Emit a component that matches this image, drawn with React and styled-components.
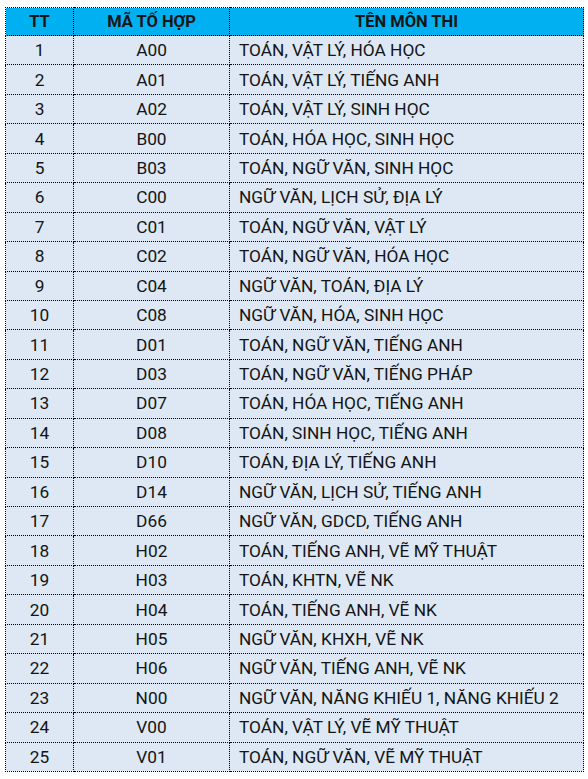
import React from "react";
import styled, { createGlobalStyle } from "styled-components";

const GlobalStyle = createGlobalStyle`
  body {
    margin: 0;
    padding: 7px 5px;
    background: #ffffff;
    font-family: Roboto, "Noto Sans", sans-serif;
  }
`;

const Table = styled.table`
  border-collapse: collapse;
  width: 578px;
  table-layout: fixed;
  color: #141414;
  font-size: 17.3px;
`;

const Col = styled.col`
  width: ${(p) => p.$w}px;
`;

const HeadCell = styled.th`
  background: #00b0f0;
  border: 1px dotted #000;
  height: 27px;
  padding: 0;
  font-weight: 700;
  font-size: 16.5px;
  text-align: center;
`;

const Row = styled.tr`
  height: 29.44px;
  background: #dde8f4;
`;

const Cell = styled.td`
  border: 1px dotted #000;
  padding: 0 ${(p) => (p.$left ? "9px" : "0")};
  text-align: ${(p) => (p.$left ? "left" : "center")};
  white-space: nowrap;
`;

const rows = [
  ["A00", "TOÁN, VẬT LÝ, HÓA HỌC"],
  ["A01", "TOÁN, VẬT LÝ, TIẾNG ANH"],
  ["A02", "TOÁN, VẬT LÝ, SINH HỌC"],
  ["B00", "TOÁN, HÓA HỌC, SINH HỌC"],
  ["B03", "TOÁN, NGỮ VĂN, SINH HỌC"],
  ["C00", "NGỮ VĂN, LỊCH SỬ, ĐỊA LÝ"],
  ["C01", "TOÁN, NGỮ VĂN, VẬT LÝ"],
  ["C02", "TOÁN, NGỮ VĂN, HÓA HỌC"],
  ["C04", "NGỮ VĂN, TOÁN, ĐỊA LÝ"],
  ["C08", "NGỮ VĂN, HÓA, SINH HỌC"],
  ["D01", "TOÁN, NGỮ VĂN, TIẾNG ANH"],
  ["D03", "TOÁN, NGỮ VĂN, TIẾNG PHÁP"],
  ["D07", "TOÁN, HÓA HỌC, TIẾNG ANH"],
  ["D08", "TOÁN, SINH HỌC, TIẾNG ANH"],
  ["D10", "TOÁN, ĐỊA LÝ, TIẾNG ANH"],
  ["D14", "NGỮ VĂN, LỊCH SỬ, TIẾNG ANH"],
  ["D66", "NGỮ VĂN, GDCD, TIẾNG ANH"],
  ["H02", "TOÁN, TIẾNG ANH, VẼ MỸ THUẬT"],
  ["H03", "TOÁN, KHTN, VẼ NK"],
  ["H04", "TOÁN, TIẾNG ANH, VẼ NK"],
  ["H05", "NGỮ VĂN, KHXH, VẼ NK"],
  ["H06", "NGỮ VĂN, TIẾNG ANH, VẼ NK"],
  ["N00", "NGỮ VĂN, NĂNG KHIẾU 1, NĂNG KHIẾU 2"],
  ["V00", "TOÁN, VẬT LÝ, VẼ MỸ THUẬT"],
  ["V01", "TOÁN, NGỮ VĂN, VẼ MỸ THUẬT"],
];

export default function App() {
  return (
    <>
      <GlobalStyle />
      <Table>
        <colgroup>
          <Col $w={68} />
          <Col $w={156} />
          <Col $w={354} />
        </colgroup>
        <thead>
          <tr>
            <HeadCell>TT</HeadCell>
            <HeadCell>MÃ TỐ HỢP</HeadCell>
            <HeadCell>TÊN MÔN THI</HeadCell>
          </tr>
        </thead>
        <tbody>
          {rows.map(([code, name], i) => (
            <Row key={code}>
              <Cell>{i + 1}</Cell>
              <Cell>{code}</Cell>
              <Cell $left>{name}</Cell>
            </Row>
          ))}
        </tbody>
      </Table>
    </>
  );
}
